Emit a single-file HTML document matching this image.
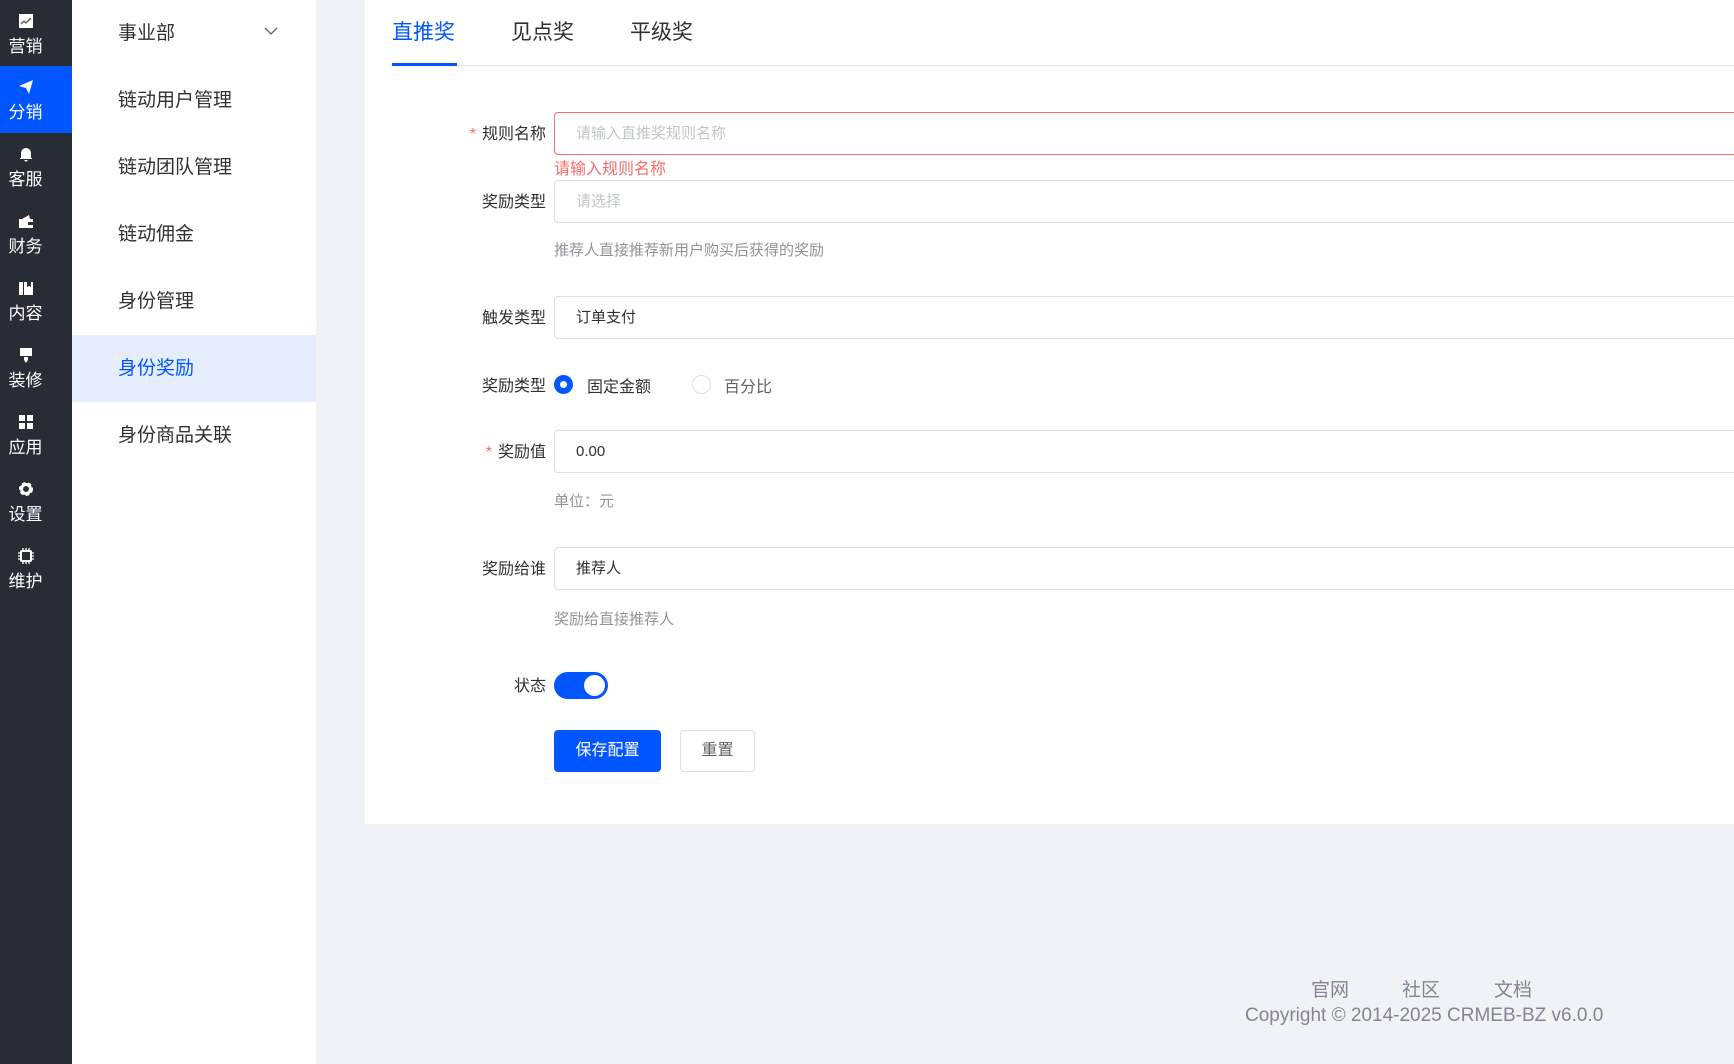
<!DOCTYPE html>
<html><head><meta charset="utf-8"><style>
*{margin:0;padding:0;box-sizing:border-box}
body{width:1734px;height:1064px;position:relative;overflow:hidden;background:#f0f2f5;font-family:"Liberation Sans","Noto Sans CJK SC",sans-serif;color:#303133}
.abs{position:absolute}
#side{left:0;top:0;width:72px;height:1064px;background:#282c34}
.si{position:absolute;left:0;width:72px;height:67px;color:#fff;text-align:center}
.si .ic{position:absolute;left:18px;top:13px;width:16px;height:16px}
.si .t{position:absolute;left:0;width:51px;top:36px;font-size:17px;line-height:22px}
#sub{left:72px;top:0;width:244px;height:1064px;background:#fff}
.mi{position:absolute;left:0;width:244px;height:67px;line-height:67px;padding-left:46px;font-size:19px;color:#303133}
#card{left:365px;top:0;width:1369px;height:824px;background:#fff}
.tab{position:absolute;top:16px;font-size:21px;color:#303133}
.lab{position:absolute;right:1188px;font-size:16px;color:#303133;text-align:right}
.inp{position:absolute;left:554px;width:1200px;height:43px;border:1px solid #dcdfe6;border-radius:4px;font-size:15px;line-height:41px;padding-left:21px;color:#303133}
.help{position:absolute;left:554px;font-size:15px;color:#909399}
.star{color:#f56c6c;margin-right:6px}
</style></head><body>
<div id="side" class="abs">
 <div class="si" style="top:0"><svg class="ic" viewBox="0 0 16 16"><rect x="1" y="1" width="14" height="14" fill="#fff"/><path d="M3 11l3-3 2 2 5-5" stroke="#555" stroke-width="1.3" fill="none"/></svg><div class="t">营销</div></div>
 <div class="si" style="top:66px;background:#0256ff"><svg class="ic" viewBox="0 0 16 16"><path d="M1 7L15 1 11 15 8 9z" fill="#fff"/></svg><div class="t">分销</div></div>
 <div class="si" style="top:133px"><svg class="ic" viewBox="0 0 16 16"><path d="M3 12V7a5 5 0 0110 0v5h1v1H2v-1z M6 14h4l-2 2z" fill="#fff"/></svg><div class="t">客服</div></div>
 <div class="si" style="top:200px"><svg class="ic" viewBox="0 0 16 16"><path d="M1 6h14v9H1z M4 6l7-4 1 4" fill="#fff"/><rect x="10" y="9" width="5" height="3" fill="#282c34"/></svg><div class="t">财务</div></div>
 <div class="si" style="top:267px"><svg class="ic" viewBox="0 0 16 16"><path d="M1 2h4v13H1z M6 2h9v13H6z" fill="#fff"/><path d="M9 2v5l2-1 2 1V2" fill="#282c34"/></svg><div class="t">内容</div></div>
 <div class="si" style="top:334px"><svg class="ic" viewBox="0 0 16 16"><path d="M2 1h12v8H2z M6 10h4v3l-2 3-2-3z" fill="#fff"/></svg><div class="t">装修</div></div>
 <div class="si" style="top:401px"><svg class="ic" viewBox="0 0 16 16"><path d="M1 1h6v6H1zM9 1h6v6H9zM1 9h6v6H1zM9 9h6v6H9z" fill="#fff"/></svg><div class="t">应用</div></div>
 <div class="si" style="top:468px"><svg class="ic" viewBox="0 0 16 16"><circle cx="8" cy="8" r="5" fill="none" stroke="#fff" stroke-width="4" stroke-dasharray="3 2"/><circle cx="8" cy="8" r="4.5" fill="none" stroke="#fff" stroke-width="3"/></svg><div class="t">设置</div></div>
 <div class="si" style="top:535px"><svg class="ic" viewBox="0 0 16 16"><rect x="3" y="3" width="10" height="10" rx="1" fill="none" stroke="#fff" stroke-width="2"/><path d="M5 0v3M8 0v3M11 0v3M5 13v3M8 13v3M11 13v3M0 5h3M0 8h3M0 11h3M13 5h3M13 8h3M13 11h3" stroke="#fff" stroke-width="1.3"/></svg><div class="t">维护</div></div>
</div>
<div id="sub" class="abs">
 <div class="mi" style="top:0">事业部<svg style="position:absolute;left:192px;top:26px" width="14" height="10" viewBox="0 0 14 10"><path d="M1 2l6 6 6-6" stroke="#606266" stroke-width="1.3" fill="none"/></svg></div>
 <div class="mi" style="top:67px">链动用户管理</div>
 <div class="mi" style="top:134px">链动团队管理</div>
 <div class="mi" style="top:201px">链动佣金</div>
 <div class="mi" style="top:268px">身份管理</div>
 <div class="mi" style="top:335px;background:#e6eefe;color:#0256ff">身份奖励</div>
 <div class="mi" style="top:402px">身份商品关联</div>
</div>
<div id="card" class="abs"></div>
<div class="tab" style="left:392px;color:#0256ff">直推奖</div>
<div class="tab" style="left:511px">见点奖</div>
<div class="tab" style="left:630px">平级奖</div>
<div class="abs" style="left:392px;top:65px;width:1342px;height:1px;background:#e4e7ed"></div>
<div class="abs" style="left:392px;top:63px;width:65px;height:3px;background:#0256ff"></div>

<div class="lab" style="top:120px"><span class="star">*</span>规则名称</div>
<div class="inp" style="top:112px;border-color:#f56c6c;color:#c0c4cc">请输入直推奖规则名称</div>
<div class="abs" style="left:554px;top:155px;font-size:16px;color:#f56c6c">请输入规则名称</div>
<div class="lab" style="top:188px">奖励类型</div>
<div class="inp" style="top:180px;color:#c0c4cc">请选择</div>
<div class="help" style="top:239px">推荐人直接推荐新用户购买后获得的奖励</div>
<div class="lab" style="top:304px">触发类型</div>
<div class="inp" style="top:296px">订单支付</div>
<div class="lab" style="top:372px">奖励类型</div>
<div class="abs" style="left:554px;top:375px;width:19px;height:19px;border-radius:50%;background:#0256ff"><div style="position:absolute;left:6px;top:6px;width:7px;height:7px;border-radius:50%;background:#fff"></div></div>
<div class="abs" style="left:587px;top:373px;font-size:16px">固定金额</div>
<div class="abs" style="left:692px;top:375px;width:19px;height:19px;border-radius:50%;border:1px solid #dcdfe6"></div>
<div class="abs" style="left:724px;top:373px;font-size:16px;color:#606266">百分比</div>
<div class="lab" style="top:438px"><span class="star">*</span>奖励值</div>
<div class="inp" style="top:430px">0.00</div>
<div class="help" style="top:490px">单位：元</div>
<div class="lab" style="top:555px">奖励给谁</div>
<div class="inp" style="top:547px">推荐人</div>
<div class="help" style="top:608px">奖励给直接推荐人</div>
<div class="lab" style="top:672px">状态</div>
<div class="abs" style="left:554px;top:672px;width:54px;height:27px;border-radius:14px;background:#0256ff"><div style="position:absolute;left:30px;top:3px;width:21px;height:21px;border-radius:50%;background:#fff"></div></div>
<div class="abs" style="left:554px;top:730px;width:107px;height:42px;border-radius:4px;background:#0256ff;color:#fff;font-size:16px;line-height:42px;text-align:center">保存配置</div>
<div class="abs" style="left:680px;top:730px;width:75px;height:42px;border-radius:4px;border:1px solid #dcdfe6;background:#fff;font-size:16px;line-height:40px;text-align:center;color:#606266">重置</div>

<div class="abs" style="left:1311px;top:975px;font-size:19px;color:#808695">官网</div>
<div class="abs" style="left:1402px;top:975px;font-size:19px;color:#808695">社区</div>
<div class="abs" style="left:1494px;top:975px;font-size:19px;color:#808695">文档</div>
<div class="abs" style="left:1245px;top:1005px;font-size:19px;color:#808695">Copyright © 2014-2025 CRMEB-BZ v6.0.0</div>
</body></html>
